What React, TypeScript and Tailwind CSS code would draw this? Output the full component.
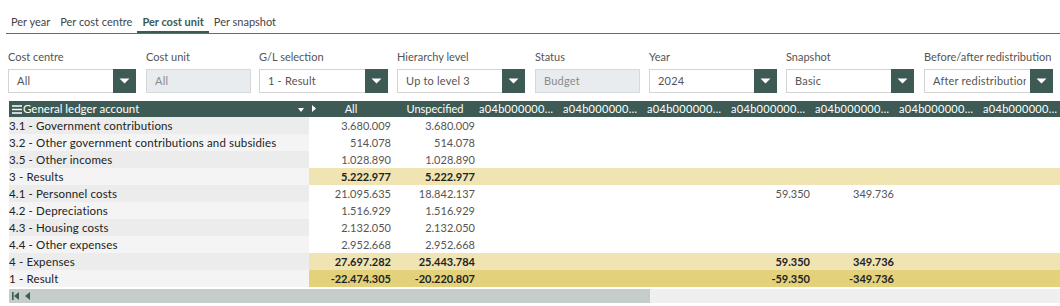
type Row = {
  label: string
  all: string
  unspec: string
  c4?: string
  c5?: string
  kind?: 'sub' | 'total'
}

const rows: Row[] = [
  { label: '3.1 - Government contributions', all: '3.680.009', unspec: '3.680.009' },
  { label: '3.2 - Other government contributions and subsidies', all: '514.078', unspec: '514.078' },
  { label: '3.5 - Other incomes', all: '1.028.890', unspec: '1.028.890' },
  { label: '3 - Results', all: '5.222.977', unspec: '5.222.977', kind: 'sub' },
  { label: '4.1 - Personnel costs', all: '21.095.635', unspec: '18.842.137', c4: '59.350', c5: '349.736' },
  { label: '4.2 - Depreciations', all: '1.516.929', unspec: '1.516.929' },
  { label: '4.3 - Housing costs', all: '2.132.050', unspec: '2.132.050' },
  { label: '4.4 - Other expenses', all: '2.952.668', unspec: '2.952.668' },
  { label: '4 - Expenses', all: '27.697.282', unspec: '25.443.784', c4: '59.350', c5: '349.736', kind: 'sub' },
  { label: '1 - Result', all: '-22.474.305', unspec: '-20.220.807', c4: '-59.350', c5: '-349.736', kind: 'total' },
]

const tabs = ['Per year', 'Per cost centre', 'Per cost unit', 'Per snapshot']

// filtros de la cabecera
const filters = [
  { label: 'Cost centre', value: 'All', outer: 'w-[138px]', w: 'w-[128px]' },
  { label: 'Cost unit', value: 'All', outer: 'w-[113px]', w: 'w-[105px]', disabled: true },
  { label: 'G/L selection', value: '1 - Result', outer: 'w-[138px]', w: 'w-[129px]' },
  { label: 'Hierarchy level', value: 'Up to level 3', outer: 'w-[138px]', w: 'w-[128px]' },
  { label: 'Status', value: 'Budget', outer: 'w-[114px]', w: 'w-[105px]', disabled: true },
  { label: 'Year', value: '2024', outer: 'w-[137px]', w: 'w-[128px]' },
  { label: 'Snapshot', value: 'Basic', outer: 'w-[138px]', w: 'w-[128px]' },
  { label: 'Before/after redistribution', value: 'After redistribution', outer: 'w-[136px]', w: 'w-[129px]' },
]

function Caret() {
  return (
    <svg width="11" height="6" viewBox="0 0 11 6">
      <path d="M0.5 0.5h10L5.5 5.5z" fill="white" />
    </svg>
  )
}

function Filter({
  label,
  value,
  outer,
  w,
  disabled,
}: {
  label: string
  value: string
  outer: string
  w: string
  disabled?: boolean
}) {
  return (
    <div className={`${outer} shrink-0 flex flex-col`}>
      <span className="text-[11px] leading-[14px] text-[#555] whitespace-nowrap">{label}</span>
      <div
        className={`${w} mt-[5px] h-[24px] flex border ${disabled ? 'bg-[#e9ecef] border-[#d6d9dc]' : 'bg-white border-[#d4d4d4]'}`}
      >
        <div className="flex-1 min-w-0 pr-[4px]">
          <div
            className={`overflow-hidden whitespace-nowrap pl-[8px] text-[11px] tracking-[0.2px] leading-[22px] ${disabled ? 'text-[#8a8a8a]' : 'text-[#555]'}`}
          >
            {value}
          </div>
        </div>
        {!disabled && (
          <span className="w-[23px] shrink-0 bg-[#3d5a55] flex items-center justify-center -my-px -mr-px">
            <Caret />
          </span>
        )}
      </div>
    </div>
  )
}

export default function App() {
  const extraCols = Array.from({ length: 7 })

  return (
    <div className="w-[1060px] h-[306px] overflow-hidden bg-white font-['Lato',sans-serif] text-[#222]">
      {/* pestañas */}
      <div className="ml-[6px] pt-[14px] flex border-b border-[#5d6e6b]">
        {tabs.map((t) => (
          <div
            key={t}
            className={`px-[5px] h-[19px] text-[11px] leading-[15px] whitespace-nowrap ${
              t === 'Per cost unit' ? 'font-bold text-[#3d5a55] border-b-2 border-[#3d5a55]' : 'text-[#444]'
            }`}
          >
            {t}
          </div>
        ))}
      </div>

      {/* filtros */}
      <div className="flex pl-[8px] pt-[16px]">
        {filters.map((f) => (
          <Filter key={f.label} {...f} />
        ))}
      </div>

      {/* tabla */}
      <div className="ml-[9px] mt-[8px]">
        <div className="flex h-[16px] bg-[#3d5a55] text-white text-[11px] leading-[16px] whitespace-nowrap">
          <div className="w-[300px] shrink-0 flex items-center pl-[3px]">
            <svg width="10" height="9" viewBox="0 0 10 9" className="mr-px">
              <path d="M0 1h10M0 4.5h10M0 8h10" stroke="white" strokeWidth="1.4" />
            </svg>
            <span className="text-[11.5px]">General ledger account</span>
            <svg width="6" height="4" viewBox="0 0 6 4" className="ml-auto mr-[5px] mt-[2px]">
              <path d="M0 0h6L3 4z" fill="white" />
            </svg>
          </div>
          <div className="w-[84px] shrink-0 relative text-center">
            <svg width="4" height="7" viewBox="0 0 4 7" className="absolute left-[3px] top-[4px]">
              <path d="M0 0l4 3.5L0 7z" fill="white" />
            </svg>
            All
          </div>
          <div className="w-[84px] shrink-0 text-center">Unspecified</div>
          {extraCols.map((_, i) => (
            <div key={i} className="w-[84px] shrink-0 overflow-hidden pl-[2px] tracking-[0.3px]">
              a04b000000…
            </div>
          ))}
        </div>

        {rows.map((r, i) => {
          const valBg = r.kind === 'total' ? 'bg-[#e3d27b]' : r.kind === 'sub' ? 'bg-[#f0e4b3]' : 'bg-white'
          const valTxt = r.kind ? 'font-bold text-[#222]' : 'text-[#555]'
          return (
            <div key={r.label} className="flex h-[17px] text-[11px] leading-[17px] whitespace-nowrap">
              <div
                className={`w-[300px] shrink-0 text-[#222] text-[11.5px] tracking-[0.15px] ${i % 2 === 0 ? 'bg-[#ececec]' : 'bg-[#f4f4f4]'}`}
              >
                {r.label}
              </div>
              <div className={`flex flex-1 ${valBg} ${valTxt}`}>
                <div className="w-[84px] shrink-0 text-right pr-[2px]">{r.all}</div>
                <div className="w-[84px] shrink-0 text-right pr-[2px]">{r.unspec}</div>
                <div className="w-[84px] shrink-0" />
                <div className="w-[84px] shrink-0" />
                <div className="w-[84px] shrink-0" />
                <div className="w-[84px] shrink-0 text-right pr-[3px]">{r.c4}</div>
                <div className="w-[84px] shrink-0 text-right pr-[3px]">{r.c5}</div>
              </div>
            </div>
          )
        })}

        {/* barra de desplazamiento */}
        <div className="flex h-[14px] mt-[2px]">
          <div className="w-[641px] bg-[#c5cdca] flex items-center gap-[6px] pl-[3px]">
            <svg width="7" height="8" viewBox="0 0 7 8">
              <path d="M0 0h1.6v8H0zM7 0v8L2 4z" fill="#3d5a55" />
            </svg>
            <svg width="5" height="8" viewBox="0 0 5 8">
              <path d="M5 0v8L0 4z" fill="#3d5a55" />
            </svg>
          </div>
          <div className="flex-1 bg-[#efefef]" />
        </div>
      </div>
    </div>
  )
}
